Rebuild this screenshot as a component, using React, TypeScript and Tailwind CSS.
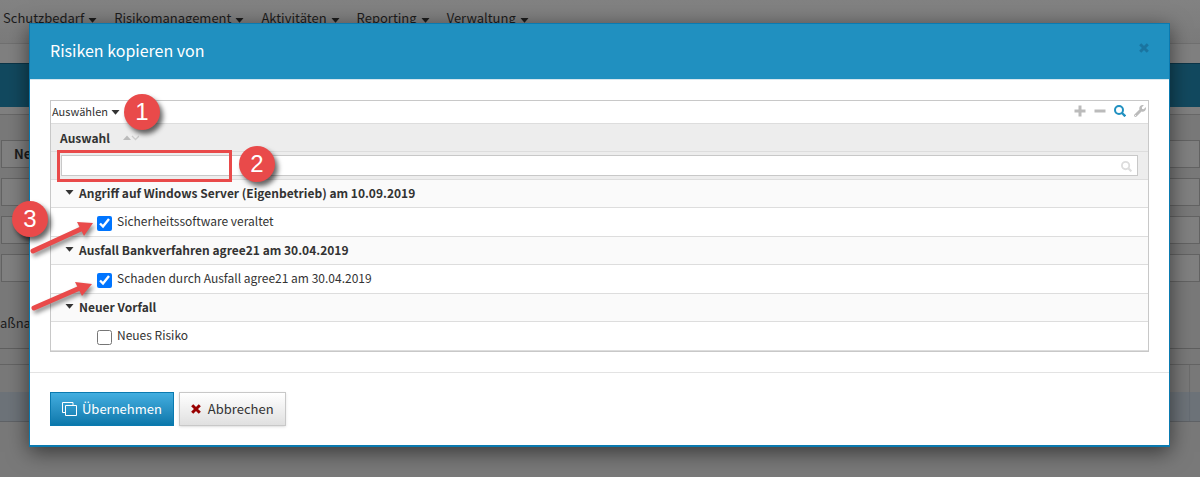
import { useState } from 'react';
import { FaWrench } from 'react-icons/fa';

const menu = ['Schutzbedarf', 'Risikomanagement', 'Aktivitäten', 'Reporting', 'Verwaltung'];

const groups = [
  {
    title: 'Angriff auf Windows Server (Eigenbetrieb) am 10.09.2019',
    items: [{ id: 'r1', label: 'Sicherheitssoftware veraltet', checked: true }],
  },
  {
    title: 'Ausfall Bankverfahren agree21 am 30.04.2019',
    items: [{ id: 'r2', label: 'Schaden durch Ausfall agree21 am 30.04.2019', checked: true }],
  },
  {
    title: 'Neuer Vorfall',
    items: [{ id: 'r3', label: 'Neues Risiko', checked: false }],
  },
];

function Caret({ className = '' }: { className?: string }) {
  return (
    <svg viewBox="0 0 9 5" className={`h-[5px] w-[9px] shrink-0 fill-current ${className}`} aria-hidden="true">
      <path d="M.5 0h8L4.500 4.800z" />
    </svg>
  );
}

function SearchIcon({ className = '' }: { className?: string }) {
  return (
    <svg viewBox="0 0 12 12" className={`shrink-0 ${className}`} fill="none" stroke="currentColor" strokeWidth="2" aria-hidden="true">
      <circle cx="5" cy="5" r="4" />
      <path d="M8 8l3.300 3.300" strokeWidth="2.400" />
    </svg>
  );
}

function CrossIcon({ className = '' }: { className?: string }) {
  return (
    <svg viewBox="0 0 10 10" className={`h-2.5 w-2.5 shrink-0 ${className}`} stroke="currentColor" strokeWidth="3" aria-hidden="true">
      <path d="M1.200 1.200l7.600 7.600M8.800 1.200L1.200 8.800" />
    </svg>
  );
}

function Callout({ n, className }: { n: number; className: string }) {
  return (
    <span
      className={`absolute flex h-9 w-9 items-center justify-center rounded-full bg-[#e94a4a] font-['Liberation_Sans',sans-serif] text-2xl text-white shadow-[3px_4px_5px_rgba(0,0,0,0.6)] ${className}`}
    >
      {n}
    </span>
  );
}

function Arrow({ line, head, className }: { line: string; head: string; className: string }) {
  return (
    <svg
      viewBox="0 0 66 36"
      className={`absolute h-9 w-[66px] drop-shadow-[2px_3px_2px_rgba(0,0,0,0.45)] ${className}`}
      aria-hidden="true"
    >
      <path d={line} stroke="#e94a4a" strokeWidth="5" strokeLinecap="round" />
      <path d={head} fill="#e94a4a" />
    </svg>
  );
}

// Page behind the dialog
function Backdrop() {
  return (
    <div className="min-h-screen bg-[#797979] text-[#1c1c1c]">
      <nav className="flex h-11 items-start gap-[17px] overflow-hidden border-b border-[#707070] bg-linear-to-b from-[#828282] to-[#7b7b7b] pt-2 pl-[3px]">
        {menu.map((m) => (
          <a key={m} href="#" className="flex items-center gap-1 text-[13px] leading-5">
            {m}
            <Caret className="mt-1" />
          </a>
        ))}
      </nav>
      <div className="h-[19px] bg-[#808080]" />
      <div className="h-11 border-t border-[#0b3548] bg-[#12495f]" />
      <div className="h-[7px] bg-[#808080]" />
      <div className="flex flex-col gap-[10px] border-t border-[#686868] pt-[25px] pl-px">
        <div className="h-7 border border-[#636363] bg-[#808080] pl-3 text-[13px] leading-[26px] font-bold">Neu</div>
        <div className="h-7 border border-[#636363] bg-[#808080]" />
        <div className="h-7 border border-[#636363] bg-[#808080]" />
        <div className="h-7 border border-[#636363] bg-[#808080]" />
      </div>
      <div className="flex h-[66px] items-center overflow-hidden pt-4 text-[13px]">aßnahmen</div>
      <div className="h-4 border-t border-[#5f5f5f]" />
      <div className="flex h-7 border-t border-[#646464] pr-[10px]">
        <div className="flex-1 border-r border-[#6c6c6c]" />
      </div>
      <div className="flex h-[30px] border-b border-[#5f6266] bg-[#6d7379] pr-[10px]">
        <div className="flex-1 border-r border-[#666c73]" />
      </div>
    </div>
  );
}

function RiskTable() {
  const [open, setOpen] = useState<Record<string, boolean>>({});

  return (
    <div className="border border-[#c8c8c8]">
      <div className="flex h-[22px] items-center justify-between pr-[2px] pl-px">
        <button className="flex items-center gap-[3px] pb-0.5 text-[11px] text-[#333]">
          Auswählen
          <Caret className="mt-0.5" />
        </button>
        <div className="flex items-center gap-2 pb-0.5 text-xs text-[#bbb]">
          <button aria-label="Hinzufügen">
            <svg viewBox="0 0 12 12" className="h-3 w-3" stroke="currentColor" strokeWidth="3" aria-hidden="true">
              <path d="M6 .5v11M.5 6h11" />
            </svg>
          </button>
          <button aria-label="Entfernen">
            <svg viewBox="0 0 12 12" className="h-3 w-3" stroke="currentColor" strokeWidth="3" aria-hidden="true">
              <path d="M.5 6h11" />
            </svg>
          </button>
          <button aria-label="Suchen" className="text-[#2090c0]">
            <SearchIcon className="h-3 w-3" />
          </button>
          <button aria-label="Einstellungen"><FaWrench /></button>
        </div>
      </div>
      <table className="w-full border-collapse text-left text-xs text-[#333]">
        <thead className="bg-[#ededed]">
          <tr className="h-7 border-t border-[#ddd]">
            <th className="py-0 pl-[9px] leading-5 font-bold">
              <span className="flex items-center">
                Auswahl
                <svg viewBox="0 0 16 6" className="ml-[13px] h-1.5 w-4 shrink-0" aria-hidden="true">
                  <path d="M0 5l4-4.500L8 5z" fill="#bbb" />
                  <path d="M9 1l3.500 3.500L16 1" fill="none" stroke="#ccc" strokeWidth="1.300" />
                </svg>
              </span>
            </th>
          </tr>
          <tr className="h-7 border-t border-[#ddd]">
            <td className="px-[10px] py-0">
              <div className="flex h-[21px] items-center border border-[#c8c8c8] bg-white pr-[5px]">
                <input type="text" aria-label="Auswahl filtern" className="h-full min-w-0 flex-1 px-1 outline-none" />
                <SearchIcon className="mt-0.5 h-[11px] w-[11px] text-[#ddd]" />
              </div>
            </td>
          </tr>
        </thead>
        {groups.map((g) => (
          <tbody key={g.title}>
            <tr className="h-7 border-t border-[#ddd] bg-[#fafafa]">
              <th className="pt-0 pb-0.5 pl-[14px] font-bold">
                <button
                  className="flex items-center gap-[5px] leading-5"
                  onClick={() => setOpen({ ...open, [g.title]: open[g.title] === false })}
                >
                  <Caret />
                  {g.title}
                </button>
              </th>
            </tr>
            {open[g.title] !== false &&
              g.items.map((it) => (
                <tr key={it.id} className="h-[29px] border-y border-[#ddd]">
                  <td className="pt-0 pb-0.5 pl-[46px]">
                    <span className="flex items-center gap-[5px]">
                      <input id={it.id} type="checkbox" defaultChecked={it.checked} className="mt-1 h-[15px] w-[15px]" />
                      <label htmlFor={it.id} className="leading-5">{it.label}</label>
                    </span>
                  </td>
                </tr>
              ))}
          </tbody>
        ))}
      </table>
    </div>
  );
}

export default function App() {
  return (
    <div lang="de" className="relative overflow-hidden font-['Noto_Sans_CJK_SC',sans-serif]">
      <Backdrop />

      <div
        role="dialog"
        aria-labelledby="dialog-title"
        className="absolute top-[23px] right-[30px] left-[29px] border border-b-2 border-[#0a7ab0] bg-white shadow-[0_5px_20px_rgba(0,0,0,0.55)]"
      >
        <header className="flex h-14 items-center justify-between border-b border-[#d5e6ee] bg-[#2090c0] px-5 pb-1">
          <h2 id="dialog-title" className="text-base text-white">Risiken kopieren von</h2>
          <button aria-label="Schließen" className="text-[#1a74a0]">
            <CrossIcon className="-mt-1" />
          </button>
        </header>
        <div className="px-5 py-5">
          <RiskTable />
        </div>
        <footer className="flex gap-[5px] border-t border-[#e3e3e3] px-5 py-[19px] text-[13px]">
          <button className="flex h-[34px] items-center gap-[5px] border border-[#0a7ab0] bg-linear-to-b from-[#42aee0] to-[#0a78ab] px-[11px] text-white">
            <svg viewBox="0 0 15 14" className="h-3.5 w-[15px]" fill="none" stroke="currentColor" aria-hidden="true">
              <path d="M3 10.500H.5V.5h10.500v2.500M3.500 3.500h11v10h-11z" />
            </svg>
            Übernehmen
          </button>
          <button className="flex h-[34px] items-center gap-[7px] border border-[#c8c8c8] bg-linear-to-b from-white to-[#e0e0e0] px-[11px] text-[#333] shadow-sm">
            <CrossIcon className="text-[#900]" />
            Abbrechen
          </button>
        </footer>
      </div>

      {/* Annotations */}
      <Callout n={1} className="top-[94px] left-[124px]" />
      <Callout n={2} className="top-[146px] left-[239px]" />
      <Callout n={3} className="top-[201px] left-[12px]" />
      <div className="pointer-events-none absolute top-[150px] left-[57px] h-8 w-[175px] border-3 border-[#e94a4a]" />
      <Arrow line="M4 32L52 10" head="M64 4L48 3L55 17z" className="top-[219px] left-[29px]" />
      <Arrow line="M4 32L50 12" head="M62 8L45 6L52 20z" className="top-[276px] left-[30px]" />
    </div>
  );
}
